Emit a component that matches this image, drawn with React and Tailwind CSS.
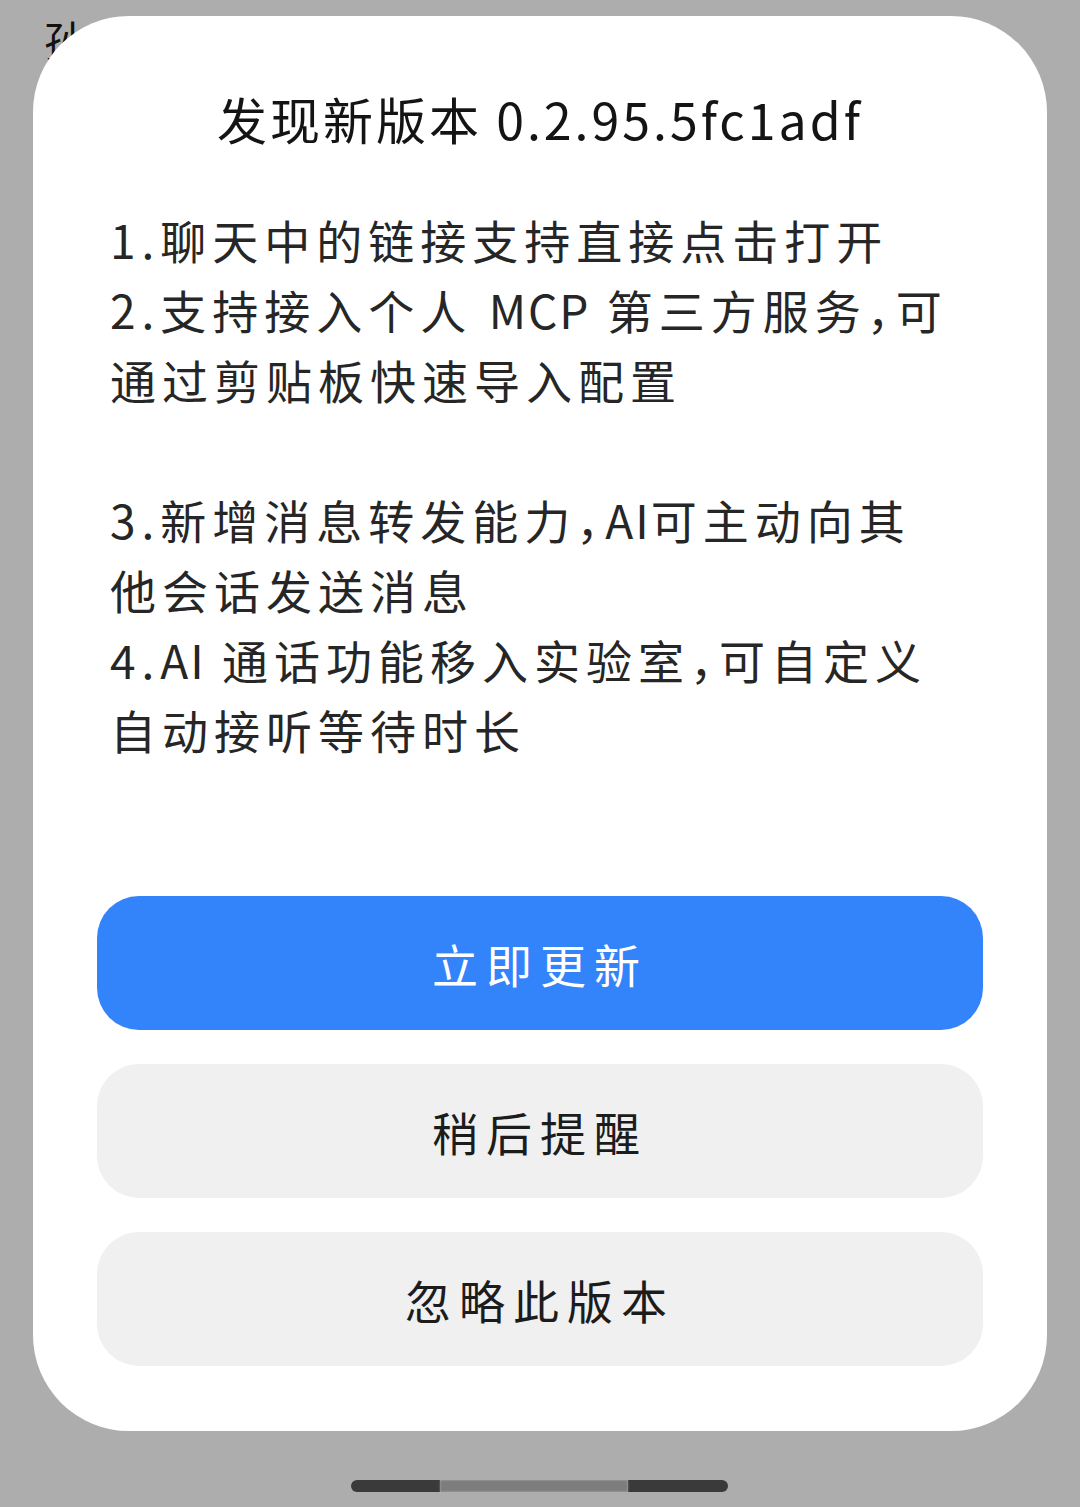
// Update-available dialog over a dimmed page (phone screenshot).
const FONT = { fontFamily: '"Noto Sans CJK SC", "Noto Sans", sans-serif' };

// fullwidth commas in the shot are set half-width
const Comma = () => <span className="[font-feature-settings:'halt']">，</span>;
const Latin = ({ children }) => <span className="tracking-[2px]">{children}</span>;

const notes = [
  <>1.聊天中的链接支持直接点击打开</>,
  <>2.支持接入个人 <Latin>MCP</Latin> 第三方服务<Comma />可</>,
  <>通过剪贴板快速导入配置</>,
  <></>,
  <>3.新增消息转发能力<Comma /><Latin>AI</Latin>可主动向其</>,
  <>他会话发送消息</>,
  <>4.<Latin>AI</Latin> 通话功能移入实验室<Comma />可自定义</>,
  <>自动接听等待时长</>,
];

function ActionButton({ label, primary }) {
  return (
    <button
      className={
        primary
          ? "flex h-[134px] w-full items-center justify-center rounded-[42px] bg-[#3384fb] text-[46px] tracking-[8px] text-white"
          : "flex h-[134px] w-full items-center justify-center rounded-[42px] bg-[#f0f0f0] text-[46px] tracking-[8px] text-[#1c1c1c]"
      }
    >
      {label}
    </button>
  );
}

export default function App() {
  return (
    <div className="relative h-[1507px] w-[1080px] overflow-hidden bg-[#adadad]" style={FONT}>
      {/* page underneath the scrim */}
      <div className="pl-[44px] pt-[18px] text-[42px] leading-none text-[#111]">孙</div>

      {/* dialog */}
      <div className="absolute left-[33px] top-[16px] flex h-[1415px] w-[1014px] flex-col rounded-[96px] bg-white">
        <h1 className="pt-[71px] text-center text-[50px] leading-[62px] tracking-[3px] text-[#141414]">
          发现新版本 0.2.95.5fc1adf
        </h1>

        <div className="mt-[55px] pl-[77px] text-[46px] leading-[70px] tracking-[6px] text-[#262626]">
          {notes.map((line, i) => (
            <div key={i} className="h-[70px] whitespace-nowrap">
              {line}
            </div>
          ))}
        </div>

        <div className="mt-auto flex flex-col gap-[34px] px-[64px] pb-[65px]">
          <ActionButton label="立即更新" primary />
          <ActionButton label="稍后提醒" />
          <ActionButton label="忽略此版本" />
        </div>
      </div>

      {/* gesture bar */}
      <div className="absolute left-[351px] top-[1480px] flex h-[12px] w-[377px] overflow-hidden rounded-full">
        <div className="w-[89px] bg-[#3a3a3a]" />
        <div className="w-[188px] bg-[#7d7d7d] blur-[1px]" />
        <div className="flex-1 bg-[#3a3a3a]" />
      </div>
    </div>
  );
}
